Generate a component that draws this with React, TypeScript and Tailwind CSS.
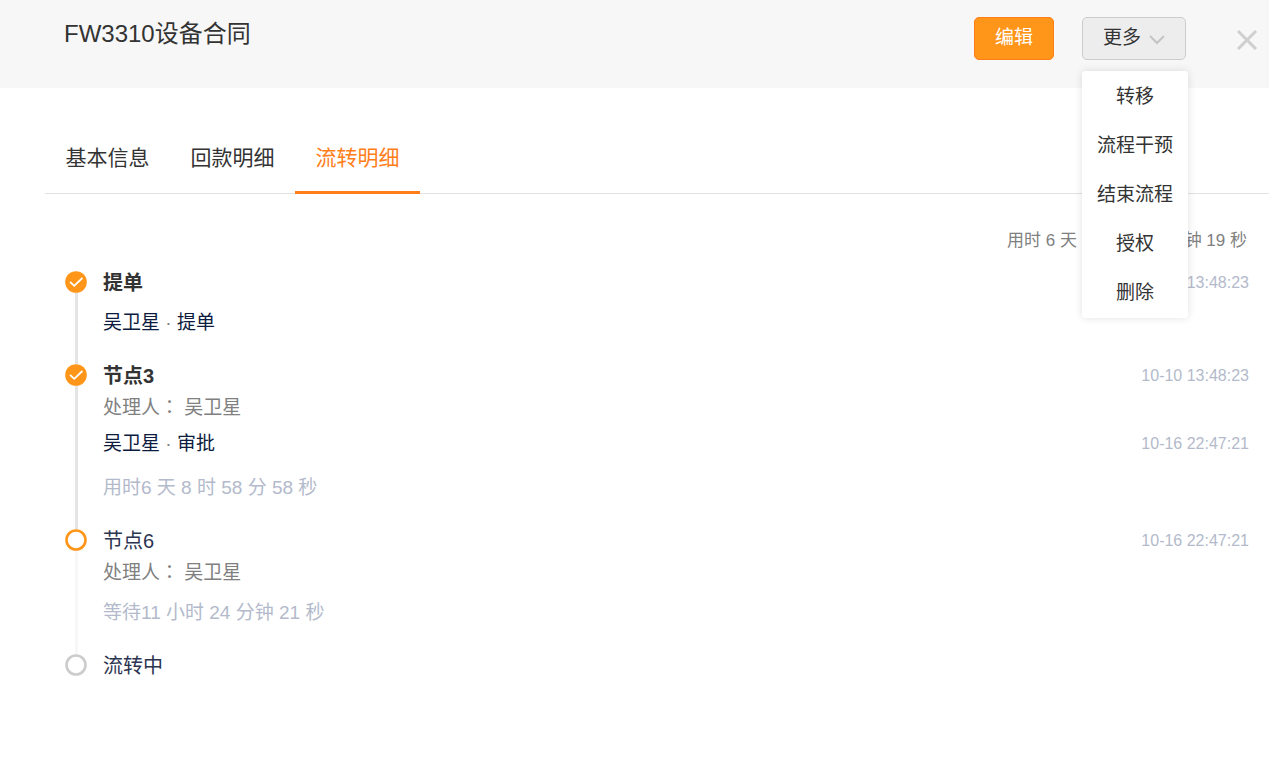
import { useState } from 'react';

type Step = {
  title: string;
  status: 'done' | 'current' | 'pending';
  time?: string;
  handler?: string;
  action?: { user: string; name: string; time?: string };
  duration?: string;
};

const tabs = ['基本信息', '回款明细', '流转明细'];

const menuItems = ['转移', '流程干预', '结束流程', '授权', '删除'];

const steps: Step[] = [
  {
    title: '提单',
    status: 'done',
    time: '10-10 13:48:23',
    action: { user: '吴卫星', name: '提单' },
  },
  {
    title: '节点3',
    status: 'done',
    time: '10-10 13:48:23',
    handler: '吴卫星',
    action: { user: '吴卫星', name: '审批', time: '10-16 22:47:21' },
    duration: '用时6 天 8 时 58 分 58 秒',
  },
  {
    title: '节点6',
    status: 'current',
    time: '10-16 22:47:21',
    handler: '吴卫星',
    duration: '等待11 小时 24 分钟 21 秒',
  },
  { title: '流转中', status: 'pending' },
];

function StepIcon({ status }: { status: Step['status'] }) {
  if (status === 'done') {
    return (
      <svg viewBox="0 0 22 22" className="w-[22px] h-[22px]" fill="none">
        <circle cx="11" cy="11" r="10.8" fill="#ff9519" />
        <path d="M5 10.8l4.2 4L17.4 7" stroke="#fff" strokeWidth="1.8" />
      </svg>
    );
  }
  return (
    <svg viewBox="0 0 22 22" className="w-[22px] h-[22px]" fill="none">
      <circle
        cx="11"
        cy="11"
        r="9.5"
        fill="#fff"
        stroke={status === 'current' ? '#ff9519' : '#cccccc'}
        strokeWidth="2.6"
      />
    </svg>
  );
}

function TimelineStep({ step, last }: { step: Step; last: boolean }) {
  const { title, status, time, handler, action, duration } = step;
  return (
    <li className="flex gap-4">
      <div className="flex flex-col items-center pt-0.5 shrink-0">
        <StepIcon status={status} />
        {!last && (
          <div className={`w-[3px] flex-1 -mb-0.5 ${status === 'done' ? 'bg-[#e4e4e4]' : 'bg-[#f7f7f7]'}`} />
        )}
      </div>
      <div className={`flex-1 ${last ? '' : 'pb-[25px]'}`}>
        <div className="flex items-center justify-between">
          <h3
            className={`text-[20px] leading-7 ${status === 'done' ? 'font-bold text-[#333333]' : 'text-[#2b3450]'}`}
          >
            {title}
          </h3>
          {time && <time className="text-base leading-7 text-[#b3bacb]">{time}</time>}
        </div>
        {handler && (
          <p className="mt-0.5 text-[19px] leading-7 text-[#808080]">
            处理人<span className="font-['Noto_Sans_CJK_TC',sans-serif]">：</span> {handler}
          </p>
        )}
        {action && (
          <div className={`flex items-center justify-between ${handler ? 'mt-2' : 'mt-3'}`}>
            <p className="text-[19px] leading-7 text-[#0c1b3e]">
              {action.user} <span className="text-[#808080]">·</span> {action.name}
            </p>
            {action.time && <time className="text-base leading-7 text-[#b3bacb]">{action.time}</time>}
          </div>
        )}
        {duration && (
          <p className={`text-[19px] leading-7 text-[#b3bacb] ${action ? 'mt-4' : 'mt-3'}`}>{duration}</p>
        )}
      </div>
    </li>
  );
}

export default function App() {
  const [activeTab, setActiveTab] = useState(2);
  const [menuOpen, setMenuOpen] = useState(true);

  return (
    <div className="min-h-screen bg-white text-[#333333] font-['Liberation_Sans','Noto_Sans_CJK_SC',sans-serif]">
      <header className="flex items-start justify-between bg-[#f7f7f7] pl-16 pr-[11px] pt-[17px] pb-7">
        <h1 className="text-2xl leading-[34px]">FW3310设备合同</h1>
        <div className="flex items-center">
          <button
            type="button"
            className="h-[43px] px-5 rounded-[5px] border border-[#ff7e1a] bg-[#ff9519] text-[19px] text-white"
          >
            编辑
          </button>
          <div className="relative ml-7">
            <button
              type="button"
              aria-expanded={menuOpen}
              onClick={() => setMenuOpen(!menuOpen)}
              className="flex items-center gap-2 h-[43px] px-5 rounded-[5px] border border-[#cccccc] bg-[#ededed] text-[19px]"
            >
              更多
              <svg viewBox="0 0 16 12" className="w-4 h-3" fill="none">
                <path d="M1 3l7 7 7-7" stroke="#c4c4c4" strokeWidth="2" />
              </svg>
            </button>
            {menuOpen && (
              <ul className="absolute left-0 top-[54px] z-10 py-px rounded-[3px] bg-white shadow-[0_0_8px_rgba(0,0,0,0.12)]">
                {menuItems.map((item) => (
                  <li key={item}>
                    <button type="button" className="block w-full px-[15px] text-[19px] leading-[49px] whitespace-nowrap">
                      {item}
                    </button>
                  </li>
                ))}
              </ul>
            )}
          </div>
          <button type="button" aria-label="关闭" className="ml-[50px]">
            <svg viewBox="0 0 22 22" className="w-[22px] h-[22px]" fill="none">
              <path d="M2 3l18 18M20 3L2 21" stroke="#cfcfcf" strokeWidth="3" />
            </svg>
          </button>
        </div>
      </header>

      <main className="pt-[34px] pb-10">
        <nav className="ml-[45px] flex border-b border-[#e2e2e2]">
          {tabs.map((tab, index) => (
            <button
              key={tab}
              type="button"
              onClick={() => setActiveTab(index)}
              className={`w-[125px] -mb-px pt-[22px] pb-[19px] text-[21px] leading-7 border-b-3 ${
                activeTab === index ? 'border-[#ff7e1a] text-[#ff7e1a]' : 'border-transparent'
              }`}
            >
              {tab}
            </button>
          ))}
        </nav>

        <section className="pl-[65px] pr-5">
          <p className="mt-[35px] pr-0.5 text-right text-[17px] leading-6 text-[#808080]">
            用时 6 天 20 小时 23 分钟 19 秒
          </p>
          <ol className="mt-4">
            {steps.map((step, index) => (
              <TimelineStep key={step.title} step={step} last={index === steps.length - 1} />
            ))}
          </ol>
        </section>
      </main>
    </div>
  );
}
